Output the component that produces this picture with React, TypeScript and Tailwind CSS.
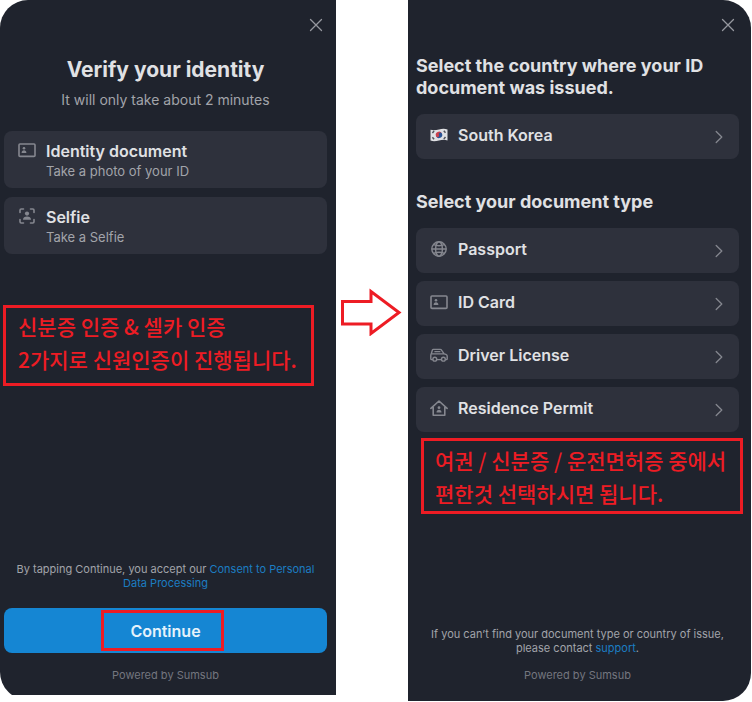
import type { ReactNode } from 'react'

function CloseIcon() {
  return (
    <svg width="14" height="14" viewBox="0 0 14 14" fill="none" stroke="currentColor" strokeWidth="1.3" strokeLinecap="round">
      <path d="M1.5 1.5l11 11M12.5 1.5l-11 11" />
    </svg>
  )
}

function ChevronIcon() {
  return (
    <svg className="shrink-0" width="8" height="14" viewBox="0 0 8 14" fill="none" stroke="currentColor" strokeWidth="1.3" strokeLinecap="round" strokeLinejoin="round">
      <path d="M1.2 1.5L6.8 7l-5.6 5.5" />
    </svg>
  )
}

function IdCardIcon() {
  return (
    <svg className="shrink-0" width="18" height="18" viewBox="0 0 18 18" fill="none">
      <rect x="1" y="3" width="16" height="12.4" rx="1" stroke="currentColor" strokeWidth="1.6" />
      <circle cx="6" cy="7.2" r="1.3" fill="currentColor" />
      <path d="M3.6 12c0-1.8 1-2.7 2.4-2.7s2.4.9 2.4 2.7z" fill="currentColor" />
    </svg>
  )
}

function SelfieIcon() {
  return (
    <svg className="shrink-0" width="18" height="18" viewBox="0 0 18 18" fill="none">
      <path
        d="M2 5.5V3.2C2 2.5 2.5 2 3.2 2h2.3M12.5 2h2.3c.7 0 1.2.5 1.2 1.2v2.3M16 12.5v2.3c0 .7-.5 1.2-1.2 1.2h-2.3M5.5 16H3.2C2.5 16 2 15.5 2 14.8v-2.3"
        stroke="currentColor"
        strokeWidth="1.6"
        strokeLinecap="round"
      />
      <circle cx="9" cy="6.6" r="2.1" fill="currentColor" />
      <path d="M5 12.7c0-2.1 1.6-3.2 4-3.2s4 1.1 4 3.2z" fill="currentColor" />
    </svg>
  )
}

function GlobeIcon() {
  return (
    <svg className="shrink-0" width="18" height="18" viewBox="0 0 18 18" fill="none" stroke="currentColor" strokeWidth="1.4">
      <circle cx="9" cy="9" r="7.2" />
      <ellipse cx="9" cy="9" rx="3.4" ry="7.2" />
      <path d="M1.8 9h14.4M3.6 4.6c3.2 1.3 7.6 1.3 10.8 0M3.6 13.4c3.2-1.3 7.6-1.3 10.8 0" />
    </svg>
  )
}

function CarIcon() {
  return (
    <svg className="shrink-0" width="18" height="18" viewBox="0 0 18 18" fill="none" stroke="currentColor" strokeWidth="1.4" strokeLinejoin="round">
      <path d="M2.8 13.6H1.6c-.5 0-.8-.3-.8-.8V9.4c0-.8.2-1.3.5-1.7L2.4 4c.2-.4.5-.6.9-.6h7c.4 0 .7.1 1 .4l2.9 4 1.7.6c.8.3 1.3.9 1.300 1.700v2.700c0 .5-.3.8-.8.8h-.9M6.800 13.600h4.600M1.400 7.900h12.600M4.400 5.600h6" />
      <circle cx="4.8" cy="13.2" r="1.9" />
      <circle cx="13.4" cy="13.2" r="1.9" />
    </svg>
  )
}

function HouseIcon() {
  return (
    <svg className="shrink-0" width="18" height="18" viewBox="0 0 18 18" fill="none">
      <path d="M3.2 8.2v8.1h11.6V8.2M.9 9.4L9 2l8.1 7.4" stroke="currentColor" strokeWidth="1.6" strokeLinecap="round" strokeLinejoin="round" />
      <circle cx="9" cy="8.7" r="1.4" fill="currentColor" />
      <path d="M6.5 13.6c0-1.9 1-2.8 2.5-2.8s2.5.9 2.5 2.8z" fill="currentColor" />
    </svg>
  )
}

function KoreaFlag() {
  return (
    <svg className="shrink-0" width="18" height="18" viewBox="0 0 18 18">
      <path d="M.5 3.7C3.4 4.6 6 4.1 9 3.4s5.6-.9 8.5 0v11c-2.9-.9-5.5-.6-8.5.1s-5.6 1.1-8.5.1z" fill="#e0e1e4" />
      <g transform="rotate(-25 9 8.9)">
        <path d="M5.8 8.9a3.2 3.2 0 0 1 6.4 0z" fill="#c9404c" />
        <path d="M12.2 8.9a3.2 3.2 0 0 1-6.4 0z" fill="#2a5596" />
        <circle cx="7.4" cy="8.9" r="1.6" fill="#c9404c" />
        <circle cx="10.6" cy="8.9" r="1.6" fill="#2a5596" />
      </g>
      <path d="M2.4 7l1.7-1.9M13.8 4.8l1.7 1.9M2.4 11.3l1.7 1.9M13.8 12.9l1.7-1.9" stroke="#50535b" strokeWidth="1.5" />
    </svg>
  )
}

const steps = [
  { title: 'Identity document', text: 'Take a photo of your ID', icon: <IdCardIcon /> },
  { title: 'Selfie', text: 'Take a Selfie', icon: <SelfieIcon /> },
]

const documents = [
  { title: 'Passport', icon: <GlobeIcon /> },
  { title: 'ID Card', icon: <IdCardIcon /> },
  { title: 'Driver License', icon: <CarIcon /> },
  { title: 'Residence Permit', icon: <HouseIcon /> },
]

function CloseButton() {
  return (
    <button type="button" aria-label="Close" className="self-end p-1 text-[#96989f]">
      <CloseIcon />
    </button>
  )
}

function OptionButton({ title, icon }: { title: string; icon: ReactNode }) {
  return (
    <button type="button" className="flex w-full h-[45px] items-center rounded-lg bg-[#2e313c] pr-4 pl-[14px] text-left text-[#85878f]">
      <span className="flex flex-1 items-center gap-[10px] pb-[3px]">
        {icon}
        <span className="text-base leading-5 font-semibold text-[#e0e1e4]">{title}</span>
      </span>
      <ChevronIcon />
    </button>
  )
}

function Note({ className, lines }: { className: string; lines: string[] }) {
  return (
    <div className={`border-3 border-[#ed1c24] font-['Noto_Sans_CJK_KR',sans-serif] text-[21px] leading-[33px] font-medium whitespace-nowrap text-[#ed1c24] ${className}`}>
      {lines.map((line) => (
        <p key={line}>{line}</p>
      ))}
    </div>
  )
}

export default function App() {
  return (
    <main className="grid min-h-screen grid-cols-[336fr_72px_343fr] bg-white pr-px pb-px font-['Inter','Noto_Sans_CJK_KR',sans-serif]">
      <div className="mb-[6px] flex overflow-hidden">
        <section className="-mb-[5px] flex w-full flex-col rounded-l-[28px] bg-[#1f232d] pt-[14px] pr-[9px] pb-[17px] pl-1">
          <CloseButton />
          <h1 className="mt-5 text-center text-[21px] leading-7 font-bold text-[#e0e1e4]">Verify your identity</h1>
          <p className="mt-[6px] text-center text-sm leading-5 text-[#a2a4aa]">It will only take about 2 minutes</p>

          <ul className="mt-[21px] space-y-[9px]">
            {steps.map((step) => (
              <li key={step.title} className="flex h-[57px] gap-[10px] rounded-lg bg-[#2e313c] pt-[10px] pl-[14px] text-[#85878f]">
                {step.icon}
                <div>
                  <h2 className="text-base leading-5 font-semibold text-[#e0e1e4]">{step.title}</h2>
                  <p className="text-[13px] leading-5 text-[#a2a4aa]">{step.text}</p>
                </div>
              </li>
            ))}
          </ul>

          <Note className="mt-[51px] mr-[13px] -ml-px pt-[2px] pb-[7px] pl-3" lines={['신분증 인증 & 셀카 인증', '2가지로 신원인증이 진행됩니다.']} />

          <p className="mt-auto text-center text-[11px] leading-[14px] text-[#a2a4aa]">
            By tapping Continue, you accept our{' '}
            <a href="#consent" className="text-[#1c7dc2]">Consent to Personal<br />Data Processing</a>
          </p>
          <button type="button" className="relative mt-[18px] h-[45px] w-full rounded-lg bg-[#1586d3] text-base font-semibold text-[#e6f2fb]">
            Continue
            <span className="absolute inset-y-[2px] right-[32%] left-[30%] border-3 border-[#ed1c24]" />
          </button>
          <p className="mt-[14px] text-center text-[11px] leading-4 text-[#74767f]">Powered by Sumsub</p>
        </section>
      </div>

      <div className="pt-[288px]">
        <svg className="mx-auto" width="62" height="48" viewBox="0 0 62 48" fill="none" stroke="#ed1c24" strokeWidth="3">
          <path d="M1.500 13.500h28.500v-10L58 24.500 30 45.500V36h-28.500z" />
        </svg>
      </div>

      <section className="flex flex-col rounded-r-[28px] bg-[#1f232d] pt-[14px] pr-3 pb-[18px] pl-2">
        <CloseButton />
        <h2 className="mt-[19px] text-lg leading-[22px] font-bold text-[#e0e1e4]">
          Select the country where your ID document was issued.
        </h2>
        <div className="mt-[15px]">
          <OptionButton title="South Korea" icon={<KoreaFlag />} />
        </div>

        <h2 className="mt-8 text-lg leading-[22px] font-bold text-[#e0e1e4]">Select your document type</h2>
        <div className="mt-[15px] space-y-2">
          {documents.map((doc) => (
            <OptionButton key={doc.title} title={doc.title} icon={doc.icon} />
          ))}
        </div>

        <Note className="mt-[6px] -mr-1 ml-[5px] pt-[3px] pb-px pl-[11px]" lines={['여권 / 신분증 / 운전면허증 중에서', '편한것 선택하시면 됩니다.']} />

        <p className="mt-auto text-center text-[11px] leading-[14px] text-[#a2a4aa]">
          If you can’t find your document type or country of issue,
          <br />
          please contact <a href="#support" className="text-[#1c7dc2]">support</a>.
        </p>
        <p className="mt-3 text-center text-[11px] leading-4 text-[#74767f]">Powered by Sumsub</p>
      </section>
    </main>
  )
}
